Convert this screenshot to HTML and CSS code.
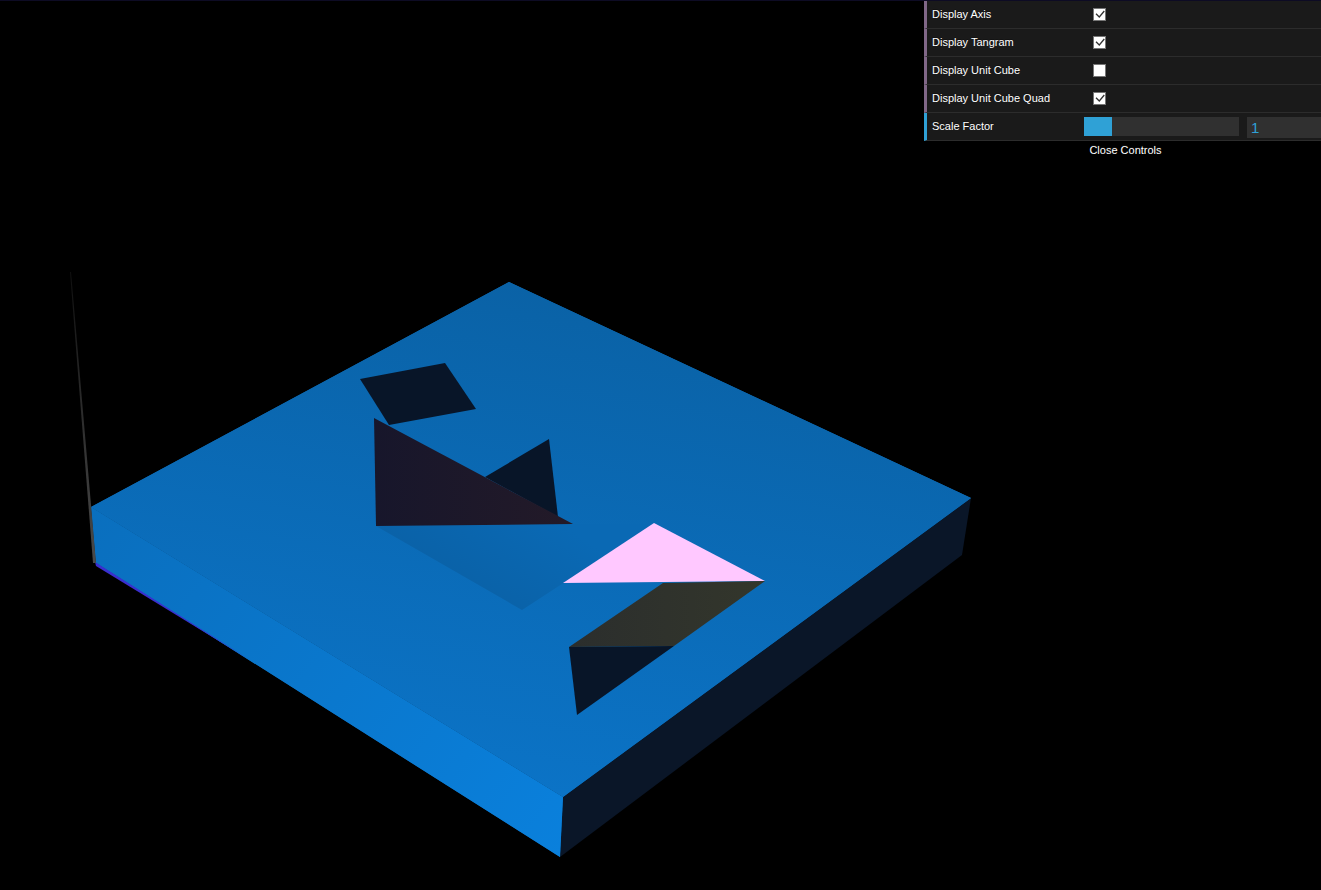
FILE: index.html
```html
<!DOCTYPE html>
<html lang="en">
<head>
<meta charset="utf-8">
<title>Tangram</title>
<link rel="stylesheet" href="styles.css">
</head>
<body>
<div class="topline"></div>
<svg class="scene" width="1321" height="890" viewBox="0 0 1321 890" aria-hidden="true">
  <defs>
    <linearGradient id="top" gradientUnits="userSpaceOnUse" x1="509" y1="282" x2="420" y2="800">
      <stop offset="0" stop-color="#0a62a6"/><stop offset="1" stop-color="#0b74c8"/>
    </linearGradient>
    <linearGradient id="left" gradientUnits="userSpaceOnUse" x1="91" y1="507" x2="560" y2="857">
      <stop offset="0" stop-color="#0a6fbe"/><stop offset="1" stop-color="#0a80dc"/>
    </linearGradient>
    <linearGradient id="big" gradientUnits="userSpaceOnUse" x1="374" y1="470" x2="573" y2="470">
      <stop offset="0" stop-color="#17162b"/><stop offset="1" stop-color="#231a28"/>
    </linearGradient>
    <linearGradient id="olive" gradientUnits="userSpaceOnUse" x1="569" y1="620" x2="765" y2="620">
      <stop offset="0" stop-color="#2b2e2d"/><stop offset="1" stop-color="#33362b"/>
    </linearGradient>
    <linearGradient id="axis" gradientUnits="userSpaceOnUse" x1="70" y1="272" x2="96" y2="563">
      <stop offset="0" stop-color="#101010"/><stop offset="1" stop-color="#4a4a4a"/>
    </linearGradient>
    <linearGradient id="shade" gradientUnits="userSpaceOnUse" x1="505" y1="610" x2="560" y2="524">
      <stop offset="0" stop-color="#0a62a8"/><stop offset="1" stop-color="#0a69b4"/>
    </linearGradient>
  </defs>
  <polygon class="side-dark" points="971,498 563,797 560,857 962,555"/>
  <polygon class="under" points="91,507 563,797 560,857 96,563"/>
  <polygon fill="url(#left)" points="91,507 563,797 560,857 96,563"/>
  <polygon class="under" points="509,282 971,498 563,797 91,507"/>
  <polygon fill="url(#top)" points="509,282 971,498 563,797 91,507"/>
  <polygon class="axis-z" points="95,562 250,660 96,566"/>
  <polygon fill="url(#axis)" points="70,272 71,272 96,563 93,563"/>
  <polygon fill="url(#shade)" points="376,526 522,610 654,524 573,524"/>
  <polygon class="deep" points="360,379 445,363 476,409 389,425"/>
  <polygon class="deep" points="549,439 558,517 485,477"/>
  <polygon fill="url(#big)" points="374,418 573,524 376,526"/>
  <polygon class="pink" points="654,523 765,581 563,583"/>
  <polygon fill="url(#olive)" points="663,583 765,581 674,646 569,647"/>
  <polygon class="deep" points="569,647 674,646 577,715"/>
</svg>
<aside class="gui">
  <ul class="rows">
    <li class="row row-bool"><span class="name">Display Axis</span><span class="box"><svg width="11" height="11" viewBox="0 0 11 11"><path d="M2 4.7 L5.3 8 L10.3 2"/></svg></span></li>
    <li class="row row-bool"><span class="name">Display Tangram</span><span class="box"><svg width="11" height="11" viewBox="0 0 11 11"><path d="M2 4.7 L5.3 8 L10.3 2"/></svg></span></li>
    <li class="row row-bool"><span class="name">Display Unit Cube</span><span class="box"></span></li>
    <li class="row row-bool"><span class="name">Display Unit Cube Quad</span><span class="box"><svg width="11" height="11" viewBox="0 0 11 11"><path d="M2 4.7 L5.3 8 L10.3 2"/></svg></span></li>
    <li class="row row-num"><span class="name">Scale Factor</span>
      <div class="slider"><div class="fill"></div></div>
      <div class="num">1</div>
    </li>
  </ul>
  <div class="close">Close Controls</div>
</aside>
</body>
</html>
```
FILE: styles.css
```css
html, body {
  margin: 0;
  height: 100%;
  background: #000;
  overflow: hidden;
}
body {
  position: relative;
  font: 11px "Liberation Sans", Arial, sans-serif;
  color: #fff;
}
.topline {
  position: relative;
  z-index: 2;
  height: 1px;
  background: #0d0b24;
}
.scene {
  position: absolute;
  left: 0;
  top: 0;
  display: block;
}
.under { fill: #0a6bb8; }
.side-dark { fill: #0a1628; }
.deep { fill: #081528; }
.pink { fill: #ffc8ff; }
.axis-z { fill: #3a2fd0; }

.gui {
  position: absolute;
  left: 924px;
  top: 1px;
  width: 403px;
}
.rows {
  list-style: none;
  margin: 0;
  padding: 0;
}
.row {
  display: flex;
  align-items: center;
  box-sizing: border-box;
  height: 28px;
  padding-left: 5px;
  background: #1a1a1a;
  border-bottom: 1px solid #2c2c2c;
  border-left: 3px solid #806787;
  text-shadow: 0 -1px 0 #111;
}
.row-num {
  border-left-color: #2fa1d6;
}
.name {
  width: 152px;
  flex: none;
}
.row-bool .name {
  padding-bottom: 2px;
}
.box {
  box-sizing: border-box;
  display: flex;
  align-items: center;
  justify-content: center;
  width: 13px;
  height: 13px;
  margin-left: 9px;
  background: #fff;
  border: 1px solid #767676;
}
.box svg {
  display: block;
  flex: none;
}
.box path {
  fill: none;
  stroke: #333;
  stroke-width: 1.3;
}
.row-num {
  align-items: flex-start;
  padding-top: 4px;
}
.row-num .name {
  line-height: 19px;
}
.slider {
  width: 155px;
  height: 19px;
  margin-right: 8px;
  background: #303030;
  flex: none;
}
.fill {
  width: 28px;
  height: 100%;
  background: #2fa1d6;
}
.num {
  box-sizing: border-box;
  flex: 1;
  height: 21px;
  padding: 2px 0 0 4px;
  background: #303030;
  color: #2fa1d6;
  font-size: 15px;
  line-height: 17px;
  text-shadow: none;
}
.close {
  height: 20px;
  line-height: 18px;
  text-align: center;
  color: #fff;
  text-shadow: 0 -1px 0 #111;
}
```
